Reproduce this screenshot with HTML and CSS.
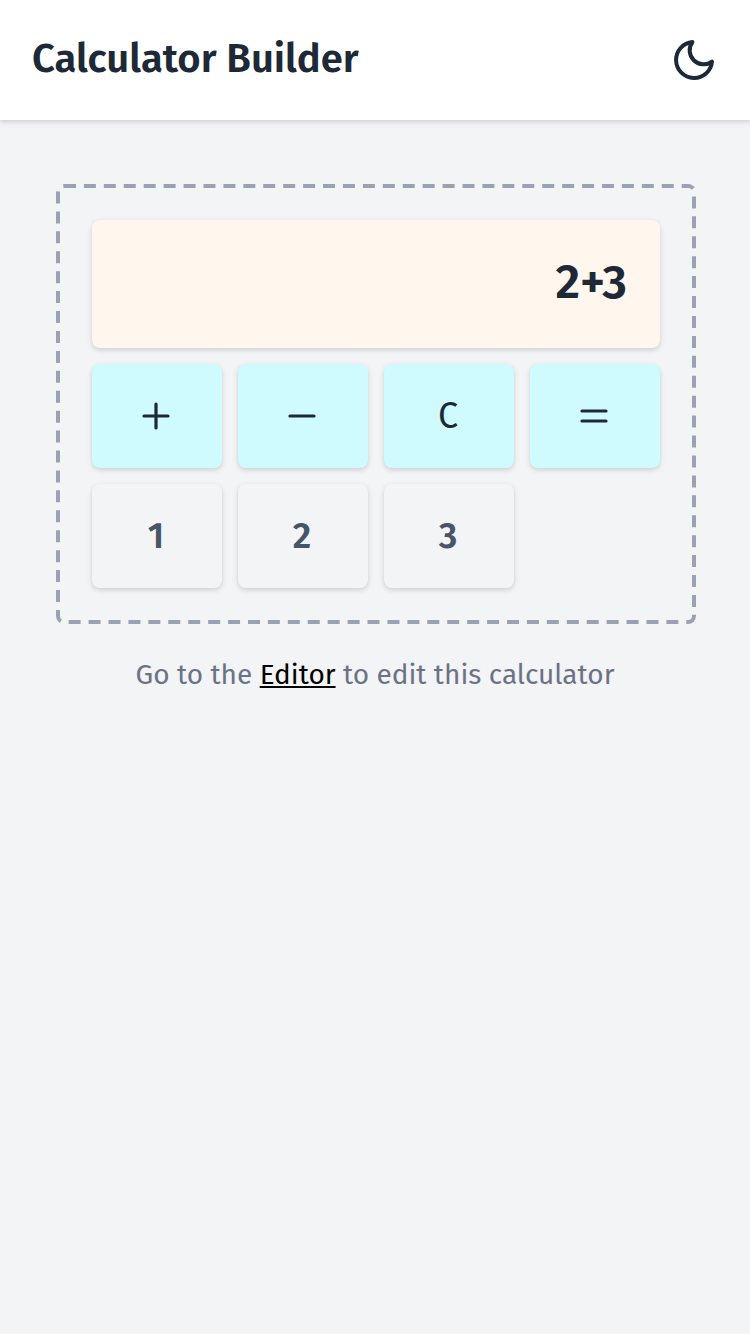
FILE: index.html
```html
<!DOCTYPE html>
<html lang="en">
<head>
<meta charset="utf-8">
<title>Calculator Builder</title>
<link rel="stylesheet" href="styles.css">
</head>
<body>
<header class="header">
  <h1 class="title">Calculator Builder</h1>
  <button class="theme" aria-label="Toggle theme">
    <svg width="48" height="48" viewBox="0 0 24 24"><path d="M21 12.79A9 9 0 1 1 11.21 3 7 7 0 0 0 21 12.79z"/></svg>
  </button>
</header>
<main class="main">
  <section class="calculator">
    <output class="display">2+3</output>
    <button class="key op" aria-label="Plus"><svg class="icon" viewBox="0 0 36 36"><path d="M18 6v24M6 18h24"/></svg></button>
    <button class="key op" aria-label="Minus"><svg class="icon" viewBox="0 0 36 36"><path d="M6 18h24"/></svg></button>
    <button class="key op"><span class="clear">C</span></button>
    <button class="key op" aria-label="Equals"><svg class="icon" viewBox="0 0 36 36"><path d="M6 13h24M6 23h24"/></svg></button>
    <button class="key">1</button>
    <button class="key">2</button>
    <button class="key">3</button>
  </section>
  <p class="hint">Go to the <a class="link" href="#">Editor</a> to edit this calculator</p>
</main>
</body>
</html>
```
FILE: styles.css
```css
*, *::before { box-sizing: border-box; }
body {
  margin: 0;
  min-height: 1334px;
  background: #f3f4f6;
  color: #1e2937;
  font-family: "Fira Sans", "Noto Sans", sans-serif;
}
.header {
  height: 120px;
  padding: 0 32px;
  display: flex;
  align-items: center;
  justify-content: space-between;
  background: #fff;
  box-shadow: 0 2px 6px rgba(0, 0, 0, .1), 0 2px 4px rgba(0, 0, 0, .06);
}
.title {
  margin: 0;
  padding-bottom: 2px;
  font-size: 40px;
  line-height: 56px;
  font-weight: 600;
  white-space: nowrap;
}
.theme {
  display: flex;
  padding: 0;
  border: 0;
  background: none;
}
.theme svg, .icon {
  fill: none;
  stroke: #1e2937;
  stroke-width: 2;
  stroke-linecap: round;
  stroke-linejoin: round;
}
.main { padding: 64px 56px 0; }
.calculator {
  position: relative;
  width: 640px;
  height: 440px;
  padding: 36px;
  display: grid;
  grid-template-columns: repeat(4, 130px);
  grid-template-rows: 128px 104px 104px;
  gap: 16px;
}
/* Dashed outline drawn at half size and doubled, for long dashes */
.calculator::before {
  content: "";
  position: absolute;
  top: 0;
  left: 0;
  width: 50%;
  height: 50%;
  border: 2px dashed #9aa2b1;
  border-radius: 4px;
  transform: scale(2);
  transform-origin: 0 0;
  pointer-events: none;
}
.display, .key {
  border-radius: 8px;
  box-shadow: 0 2px 6px rgba(0, 0, 0, .1), 0 2px 4px rgba(0, 0, 0, .06);
}
.display {
  grid-column: 1 / -1;
  display: flex;
  align-items: center;
  justify-content: flex-end;
  padding: 0 33px 4px 0;
  background: #fff6ed;
  font-size: 48px;
  font-weight: 600;
}
.key {
  display: flex;
  align-items: center;
  justify-content: center;
  padding: 0 2px 0 0;
  border: 0;
  background: #f3f4f6;
  color: #475569;
  font: 600 36px "Fira Sans", "Noto Sans", sans-serif;
}
.op { background: #cffafe; color: #1e2937; }
.icon { width: 36px; height: 36px; stroke-width: 3.2; }
.clear { font-weight: 400; }
.hint {
  margin: 30px 0 0;
  text-align: center;
  font-size: 28px;
  line-height: 42px;
  color: #6b7285;
  white-space: nowrap;
}
.link {
  color: #000;
  text-decoration-line: underline;
}
```
